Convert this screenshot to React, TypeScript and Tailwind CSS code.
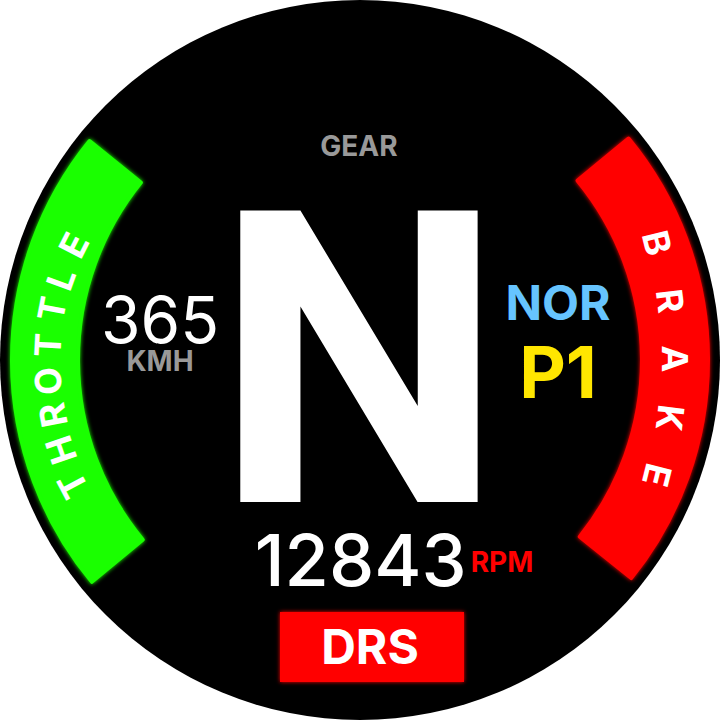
type Letter = { char: string; x: number; y: number; tilt: number };

const throttle: Letter[] = [
  { char: "T", x: 73, y: 485, tilt: -118 },
  { char: "H", x: 61, y: 450, tilt: -109 },
  { char: "R", x: 53, y: 415, tilt: -101 },
  { char: "O", x: 48, y: 381, tilt: -94 },
  { char: "T", x: 48, y: 345, tilt: -87 },
  { char: "T", x: 52, y: 309, tilt: -79 },
  { char: "L", x: 61, y: 279, tilt: -70 },
  { char: "E", x: 74, y: 245, tilt: -63 },
];

const brake: Letter[] = [
  { char: "B", x: 657, y: 243, tilt: 76 },
  { char: "R", x: 670, y: 301, tilt: 83 },
  { char: "A", x: 675, y: 359, tilt: 90 },
  { char: "K", x: 670, y: 418, tilt: 97 },
  { char: "E", x: 657, y: 475, tilt: 104 },
];

// Each letter is centred on its own point of the band and turned by its tilt.
function ArcLabel({ label, letters }: { label: string; letters: Letter[] }) {
  return (
    <g role="img" aria-label={label} className="fill-white text-[36px] font-bold">
      {letters.map(({ char, x, y, tilt }, i) => (
        <text key={i} y={13} textAnchor="middle" transform={`translate(${x} ${y}) rotate(${tilt})`}>
          {char}
        </text>
      ))}
    </g>
  );
}

// Outline of a ring segment between two angles, measured clockwise from the top.
function segment(from: number, to: number, inner: number, outer: number) {
  const point = (angle: number, r: number) => {
    const a = (angle * Math.PI) / 180;
    return `${360 + r * Math.sin(a)} ${360 - r * Math.cos(a)}`;
  };
  return `M${point(from, outer)} A${outer} ${outer} 0 0 1 ${point(to, outer)} L${point(to, inner)} A${inner} ${inner} 0 0 0 ${point(from, inner)}Z`;
}

function Pedals() {
  return (
    <svg viewBox="0 0 720 720" className="absolute inset-0 h-full w-full">
      <path
        d={segment(230.4, 309, 282, 348)}
        strokeWidth={4}
        strokeLinejoin="round"
        className="fill-[#1aff00] stroke-[#1aff00] drop-shadow-[0_0_2px_#1aff00]"
      />
      <path
        d={segment(50.5, 128.8, 282, 348)}
        strokeWidth={4}
        strokeLinejoin="round"
        className="fill-[#ff0000] stroke-[#ff0000] drop-shadow-[0_0_2px_#ff0000]"
      />
      <ArcLabel label="THROTTLE" letters={throttle} />
      <ArcLabel label="BRAKE" letters={brake} />
    </svg>
  );
}

export default function App() {
  return (
    <main className="flex justify-center bg-white font-['Inter',sans-serif] text-white">
      <div className="relative aspect-square w-full max-w-[720px] overflow-hidden rounded-full bg-black">
        <Pedals />
        <div className="relative flex flex-col items-center pt-[130px]">
          <h1 className="pr-[2px] text-[28px] leading-8 font-bold text-[#999999]">GEAR</h1>

          <div className="mt-11 flex items-start justify-center pr-[2px]">
            <div className="w-36 pt-[89px] text-center">
              <p className="text-[64px] leading-[50px]">365</p>
              <p className="text-[28px] leading-8 font-bold text-[#999999]">KMH</p>
            </div>
            <p className="flex w-[254px] justify-center font-['Roboto',sans-serif] text-[410px] leading-[312px] font-bold">
              N
            </p>
            <div className="w-36 pt-[67px] text-center">
              <p className="text-[48px] leading-[60px] font-bold text-[#66c4ff]">NOR</p>
              <p className="text-[72px] leading-[78px] font-bold text-[#ffe600]">P1</p>
            </div>
          </div>

          <p className="mt-[2px] flex items-center pl-[68px]">
            <span className="text-[72px] leading-[80px] font-medium">12843</span>
            <span className="ml-1 pt-1 text-[28px] leading-8 font-bold text-[#ff0000]">RPM</span>
          </p>

          <div className="mt-3 ml-6 w-[184px] bg-[#ff0000] pr-1 text-center text-[48px] leading-[70px] font-bold shadow-[0_0_4px_#ff0000]">
            DRS
          </div>
        </div>
      </div>
    </main>
  );
}
